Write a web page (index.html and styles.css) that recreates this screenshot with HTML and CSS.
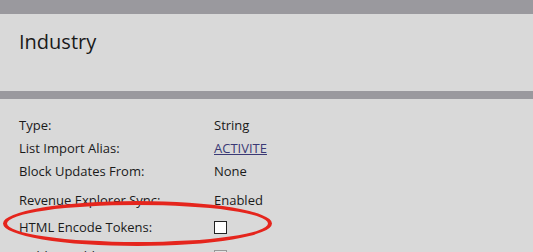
FILE: index.html
```html
<!DOCTYPE html>
<html lang="en">
<head>
    <meta charset="UTF-8">
    <title>Industry</title>
    <link rel="stylesheet" href="styles.css">
</head>
<body>
    <!-- Top bar -->
    <div class="top-bar"></div>

    <!-- Field title -->
    <header class="field-header">
        <h1>Industry</h1>
    </header>

    <div class="divider"></div>

    <!-- Field properties -->
    <div class="props">
        <div class="prop-row">
            <span class="prop-label">Type:</span>
            <span class="prop-value">String</span>
        </div>
        <div class="prop-row">
            <span class="prop-label">List Import Alias:</span>
            <span class="prop-value"><a href="#">ACTIVITE</a></span>
        </div>
        <div class="prop-row">
            <span class="prop-label">Block Updates From:</span>
            <span class="prop-value">None</span>
        </div>
        <div class="prop-row tall">
            <span class="prop-label">Revenue Explorer Sync:</span>
            <span class="prop-value">Enabled</span>
        </div>
        <div class="prop-row tall highlight">
            <span class="prop-label">HTML Encode Tokens:</span>
            <span class="prop-value"><span class="checkbox"></span></span>
            <span class="circle"></span>
        </div>
        <div class="prop-row tall">
            <span class="prop-label">Hidden Field:</span>
            <span class="prop-value"><span class="checkbox disabled"></span></span>
        </div>
    </div>
</body>
</html>
```

FILE: styles.css
```css
/* General Styles */
body {
    font-family: 'Open Sans', 'Liberation Sans', sans-serif;
    margin: 0;
    padding: 0;
    background-color: #d9d9d9;
    color: #1a1a1a;
    overflow: hidden;
}

.top-bar {
    height: 14px;
    background-color: #9a999e;
}

.field-header {
    height: 77px;
    padding: 0 19px;
    box-sizing: border-box;
}

.field-header h1 {
    margin: 0;
    padding-top: 14px;
    font-size: 20px;
    font-weight: 400;
    line-height: 28px;
}

.divider {
    height: 8px;
    background-color: #9a999e;
}

.props {
    padding: 14px 19px 0;
}

.prop-row {
    position: relative;
    display: flex;
    align-items: center;
    height: 23px;
    font-size: 13px;
}

.prop-row.tall {
    height: 28px;
    align-items: flex-end;
    padding-bottom: 1px;
    box-sizing: border-box;
}

.prop-row.highlight {
    padding-bottom: 2px;
}

.prop-label {
    width: 195px;
}

.prop-value a {
    color: #3a3975;
}

.checkbox {
    display: block;
    width: 11px;
    height: 11px;
    border: 1px solid #222;
    background-color: #fff;
    margin-bottom: 2px;
}

.checkbox.disabled {
    border-color: #999;
    background-color: #e4e4e4;
}

/* hand-drawn annotation round the row */
.circle {
    position: absolute;
    left: -16px;
    top: -9px;
    width: 261px;
    height: 37px;
    border: 4px solid #e5251d;
    border-radius: 50%;
    pointer-events: none;
}
```
